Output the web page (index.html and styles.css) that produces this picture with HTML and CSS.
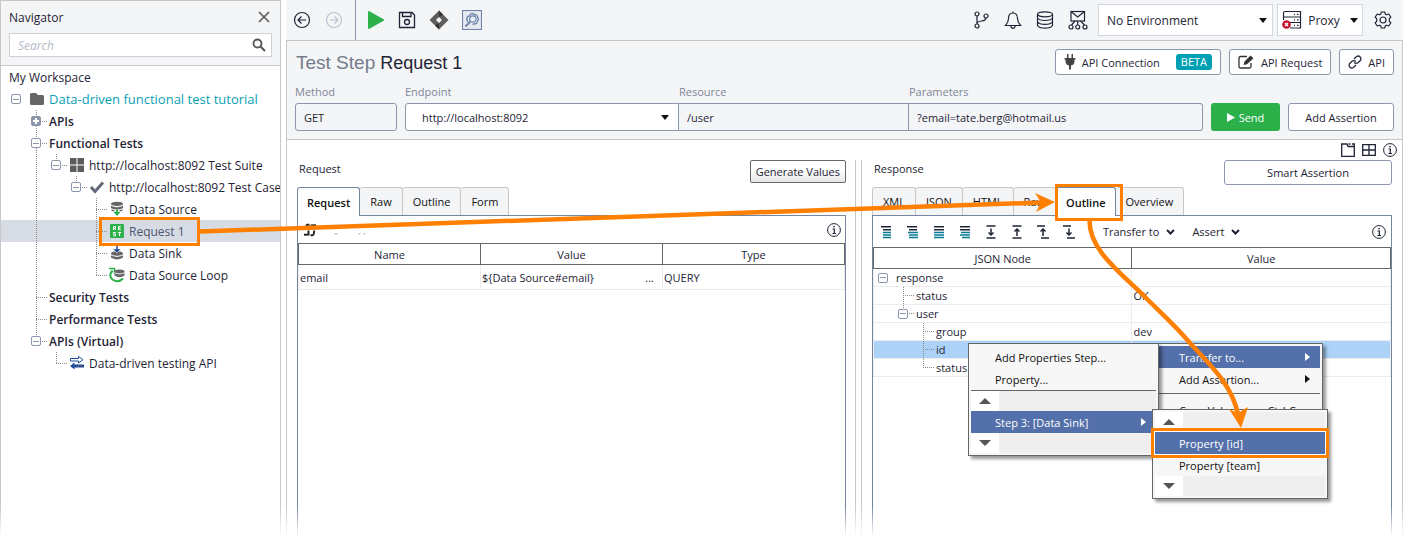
FILE: index.html
```
<!DOCTYPE html>
<html lang="en">
  <head>
    <meta charset="utf-8">
    <title>Test Step - Request 1</title>
    <link rel="stylesheet" href="styles.css">
  </head>

  <body>
    <nav class="navigator">
      <div class="nav-header">
        <div class="nav-title">
          <span>Navigator</span>
          <button class="icon-button" aria-label="Close">
            <svg width="12" height="12" viewBox="0 0 12 12"><path d="M1 1L11 11M11 1L1 11" stroke="#5a5a5a" stroke-width="1.6" fill="none"/></svg>
          </button>
        </div>
        <div class="search">
          <input type="text" placeholder="Search" aria-label="Search">
          <svg width="14" height="14" viewBox="0 0 14 14"><circle cx="5.5" cy="5.5" r="4" stroke="#555" stroke-width="1.8" fill="none"/><path d="M8.5 8.5L13 13" stroke="#555" stroke-width="2"/></svg>
        </div>
      </div>

      <ul class="tree">
        <li class="row root">My Workspace</li>
        <li class="row">
          <span class="cell last"><button class="toggle" aria-label="Collapse project"></button></span>
          <svg class="node-icon" width="16" height="16" viewBox="0 0 16 16"><path d="M1 3.5Q1 2 2.5 2H7L9 4H13.5Q15 4 15 5.500V12.500Q15 14 13.500 14H2.500Q1 14 1 12.500Z" fill="#666"/></svg>
          <a class="project" href="#">Data-driven functional test tutorial</a>
        </li>
        <li class="row">
          <span class="cell"></span><span class="cell v h last"><button class="toggle plus" aria-label="Expand APIs"></button></span>
          <b>APIs</b>
        </li>
        <li class="row">
          <span class="cell"></span><span class="cell v h last"><button class="toggle" aria-label="Collapse Functional Tests"></button></span>
          <b>Functional Tests</b>
        </li>
        <li class="row">
          <span class="cell"></span><span class="cell v"></span><span class="cell end h last"><button class="toggle" aria-label="Collapse Test Suite"></button></span>
          <svg class="node-icon" width="16" height="16" viewBox="0 0 16 16"><path d="M1 1h6.500v6.500H1zM8.500 1H15v6.500H8.500zM1 8.500h6.500V15H1zM8.500 8.500H15V15H8.500z" fill="#5d5d5d"/></svg>
          <span>http://localhost:8092 Test Suite</span>
        </li>
        <li class="row">
          <span class="cell"></span><span class="cell v"></span><span class="cell"></span><span class="cell end h last"><button class="toggle" aria-label="Collapse Test Case"></button></span>
          <svg class="node-icon" width="16" height="16" viewBox="0 0 16 16"><path d="M2 8L6 12.500L14 3.500" stroke="#646b78" stroke-width="3" fill="none"/></svg>
          <span>http://localhost:8092 Test Case</span>
        </li>
        <li class="row">
          <span class="cell"></span><span class="cell v"></span><span class="cell"></span><span class="cell"></span><span class="cell v h last"></span>
          <svg class="node-icon" width="16" height="16" viewBox="0 0 16 16"><g fill="#666"><ellipse cx="8" cy="3" rx="6" ry="2.300"/><path d="M2 4.500Q8 8 14 4.500V7Q8 10 2 7Z"/><path d="M2.500 8Q4 9 5.500 9.300V10.500Q3.500 10.300 2.500 9.500ZM13.500 8Q12 9 10.500 9.300V10.500Q12.500 10.300 13.500 9.500Z"/></g><path d="M2 4.300Q8 7.200 14 4.300" stroke="#fff" stroke-width=".8" fill="none"/><path d="M7 8.500H9V11H11.500L8 15L4.500 11H7Z" fill="#2bb04a"/></svg>
          <span>Data Source</span>
        </li>
        <li class="row selected">
          <span class="cell"></span><span class="cell v"></span><span class="cell"></span><span class="cell"></span><span class="cell v h last"></span>
          <svg class="node-icon" width="16" height="16" viewBox="0 0 16 16"><rect x="1" y="1" width="14" height="14" rx="1" fill="#2bb04a"/><path d="M4.500 7V3.500H6.500V5.200H4.500M5.500 5.200L6.800 7M11.800 3.500H9.500V6.800H11.800M9.500 5.200H11.500M6.800 9.500H4.500V11.100H6.500V12.800H4.200M9 9.500H12.200M10.600 9.500V13" stroke="#fff" fill="none"/></svg>
          <span>Request 1</span>
        </li>
        <li class="row">
          <span class="cell"></span><span class="cell v"></span><span class="cell"></span><span class="cell"></span><span class="cell v h last"></span>
          <svg class="node-icon" width="16" height="16" viewBox="0 0 16 16"><g fill="#666"><ellipse cx="8" cy="8.500" rx="6" ry="2.300"/><path d="M2 9.500Q8 13 14 9.500V12.500Q8 16.500 2 12.500Z"/></g><path d="M2 10.200Q8 13.200 14 10.200" stroke="#fff" stroke-width=".8" fill="none"/><path d="M7 0H9V4H12L8 8L4 4H7Z" fill="#1f4e9e" stroke="#fff" stroke-width=".5"/></svg>
          <span>Data Sink</span>
        </li>
        <li class="row">
          <span class="cell"></span><span class="cell v"></span><span class="cell"></span><span class="cell"></span><span class="cell end h last"></span>
          <svg class="node-icon" width="16" height="16" viewBox="0 0 16 16"><path d="M3.500 3.500Q-1 9 3.500 12.500Q9 16.500 14 11.500" stroke="#2bb04a" stroke-width="2" fill="none"/><path d="M0 1.500H5.500V6.500" stroke="#2bb04a" stroke-width="1.600" fill="none"/><g fill="#666"><ellipse cx="10.500" cy="4.500" rx="5" ry="2"/><path d="M5.500 5.500Q10.500 8 15.500 5.500V8.500Q10.500 12 5.500 8.500Z"/></g><path d="M5.500 5.800Q10.500 8.500 15.500 5.800" stroke="#fff" stroke-width=".7" fill="none"/></svg>
          <span>Data Source Loop</span>
        </li>
        <li class="row">
          <span class="cell"></span><span class="cell v h last"></span>
          <b>Security Tests</b>
        </li>
        <li class="row">
          <span class="cell"></span><span class="cell v h last"></span>
          <b>Performance Tests</b>
        </li>
        <li class="row">
          <span class="cell"></span><span class="cell end h last"><button class="toggle" aria-label="Collapse virtual APIs"></button></span>
          <b>APIs (Virtual)</b>
        </li>
        <li class="row">
          <span class="cell"></span><span class="cell"></span><span class="cell end h last"></span>
          <svg class="node-icon" width="16" height="16" viewBox="0 0 16 16"><path d="M1.500 3.500H9.500V1.500L14 4.700L9.500 8V6H1.500Z" fill="#fff" stroke="#1f4e9e"/><path d="M1 11L5.500 7.500V9.500H15V12.500H5.500V14.500Z" fill="#1f4e9e"/><path d="M9 11h1M12 11h1" stroke="#e0552b"/></svg>
          <span>Data-driven testing API</span>
        </li>
      </ul>
    </nav>

    <main>
      <div class="toolbar">
        <div class="tool-group history">
          <button class="icon-button" aria-label="Back"><svg width="18" height="18" viewBox="0 0 18 18" fill="none" stroke="#1e2435" stroke-width="1.200"><circle cx="9" cy="9" r="7.500"/><path d="M13 9H5M8.500 5.500L5 9L8.500 12.500"/></svg></button>
          <button class="icon-button" aria-label="Forward"><svg width="18" height="18" viewBox="0 0 18 18" fill="none" stroke="#bcc2cf" stroke-width="1.200"><circle cx="9" cy="9" r="7.500"/><path d="M5 9H13M9.500 5.500L13 9L9.500 12.500"/></svg></button>
        </div>
        <div class="tool-group">
          <button class="icon-button" aria-label="Run"><svg width="18" height="18" viewBox="0 0 18 18"><path d="M1 1Q1 0 2 0L17 8.500V9.500L2 18Q1 18 1 17Z" fill="#2bb04a"/></svg></button>
          <button class="icon-button" aria-label="Save"><svg width="18" height="18" viewBox="0 0 18 18" fill="none" stroke="#1e2435" stroke-width="1.300"><path d="M1.500 1.500H14L16.500 4V16.500H1.500ZM4.500 1.500V5.500H13V1.500"/><circle cx="9" cy="11" r="2.500"/></svg></button>
          <button class="icon-button" aria-label="Integrations"><svg width="20" height="20" viewBox="0 0 20 20"><path d="M10 .5L19.500 10L10 19.500L.5 10Z" fill="#5d5d5d"/><path d="M10 .5L14 4.500L10 7ZM10 13V19.500L6 15.500Z" fill="#333"/><path d="M10 7L13 10L10 13L7 10Z" fill="#f4f5f7"/></svg></button>
          <button class="icon-button" aria-label="Preferences"><svg width="20" height="20" viewBox="0 0 20 20" fill="none" stroke="#7286a8"><rect x=".5" y=".5" width="19" height="19" fill="#e6ebf3" stroke-width="1.200"/><path d="M5.800 12Q4 9 5.500 6.500L7.500 6L8.500 4L11 3.500L12.500 4.500L14.500 5L15.500 7L16.500 9L15.500 11.500L14.500 13.500L12 14L10.500 14.500" stroke-width="1.400"/><circle cx="10.800" cy="9" r="3.200" stroke-width="1.200"/><path d="M8.300 11.500L3.500 16.500" stroke-width="2"/></svg></button>
        </div>
        <div class="tool-group right">
          <button class="icon-button" aria-label="Branches"><svg width="18" height="18" viewBox="0 0 18 18" fill="none" stroke="#1e2435" stroke-width="1.200"><circle cx="5" cy="3" r="2"/><circle cx="5" cy="15" r="2"/><circle cx="14" cy="5" r="2"/><path d="M5 5V13M14 7Q14 9.500 9.500 10Q5 10.500 5 13"/></svg></button>
          <button class="icon-button" aria-label="Notifications"><svg width="18" height="18" viewBox="0 0 18 18" fill="none" stroke="#1e2435" stroke-width="1.200"><path d="M9 2Q4.500 2 4.500 7.500Q4.500 11.500 1.500 14.500H16.500Q13.500 11.500 13.500 7.500Q13.500 2 9 2ZM9 2V.5M6.800 14.500Q7 17.400 9 17.400Q11 17.400 11.200 14.500"/></svg></button>
          <button class="icon-button" aria-label="Databases"><svg width="18" height="18" viewBox="0 0 18 18" fill="none" stroke="#1e2435" stroke-width="1.200"><ellipse cx="9" cy="3.300" rx="7.500" ry="2.500"/><path d="M1.500 3.300V14.500Q3 17.200 9 17.200Q15 17.200 16.500 14.500V3.300M1.500 7Q3 9.500 9 9.500Q15 9.500 16.500 7M1.500 10.700Q3 13.400 9 13.400Q15 13.400 16.500 10.700"/></svg></button>
          <button class="icon-button" aria-label="Messages"><svg width="20" height="20" viewBox="0 0 20 20" fill="none" stroke="#1e2435" stroke-width="1.200"><rect x="3" y="1.500" width="13.500" height="9.500"/><path d="M3 1.500L9.700 7L16.500 1.500M9.700 11V15M7 11L3.500 15M12.500 11L16.500 15"/><circle cx="3" cy="17" r="2"/><circle cx="9.700" cy="17" r="2"/><circle cx="17" cy="17" r="2"/></svg></button>
          <select class="environment" aria-label="Environment"><option>No Environment</option></select>
          <button class="proxy">
            <svg width="20" height="20" viewBox="0 0 20 20" fill="none" stroke="#1e2435" stroke-width="1.200"><path d="M1.500 8V3Q1.500 1.500 3 1.500H18.500V7H1.500M8 12.500H18.500V7M8 18H18.500V12.500M1.500 10V7M12 4.300H13M15 4.300H16.500M12 9.800H13M15 9.800H16.500M12 15.300H13M15 15.300H16.500"/><circle cx="4.500" cy="14.500" r="4.300" fill="#c8102e" stroke="none"/><path d="M3 13L6 16M6 13L3 16" stroke="#fff" stroke-width="1.400"/></svg>
            Proxy
            <svg class="caret" width="8" height="5" viewBox="0 0 8 5"><path d="M0 0H8L4 5Z" fill="#111"/></svg>
          </button>
          <button class="icon-button" aria-label="Settings"><svg width="18" height="18" viewBox="0 0 18 18" fill="none" stroke="#1e2435" stroke-width="1.200"><path d="M7.300 1H10.700L11.300 3.200L12.500 3.800L14.700 3L16.800 6L15.300 7.800V10.200L16.800 12L14.700 15L12.500 14.200L11.300 14.800L10.700 17H7.300L6.700 14.800L5.500 14.200L3.300 15L1.200 12L2.700 10.200V7.800L1.200 6L3.300 3L5.500 3.800L6.700 3.200Z" stroke-linejoin="round"/><circle cx="9" cy="9" r="3"/></svg></button>
        </div>
      </div>

      <section class="step">
        <div class="step-title">
          <h1><span>Test Step</span> Request 1</h1>
          <button class="button"><svg width="12" height="16" viewBox="0 0 12 16" fill="#444"><path d="M3 0H4.500V4H3ZM7.500 0H9V4H7.500ZM.5 4H11.500V5.500H10.500V8Q10 11 7 11.500V15.500H5V11.500Q2 11 1.500 8V5.500H.5Z"/></svg>API Connection<span class="beta">BETA</span></button>
          <button class="button"><svg width="17" height="14" viewBox="0 0 17 14" fill="none"><path d="M13 8V11.500Q13 13 11.500 13H2.500Q1 13 1 11.500V3Q1 1.500 2.500 1.500H9" stroke="#333" stroke-width="1.300"/><path d="M5.500 10L6.500 6.500L12.500 .5L15.500 3.200L9 9.200Z" fill="#333"/></svg>API Request</button>
          <button class="button"><svg width="14" height="14" viewBox="0 0 14 14" fill="none" stroke="#222b3d" stroke-width="1.300"><path d="M6 4L8.500 1.500Q10.500 .3 12 1.800Q13.600 3.400 12.500 5.300L10 7.800Q8 9.200 6 7.500M8 10L5.500 12.500Q3.500 13.700 2 12.200Q.4 10.600 1.500 8.700L4 6.200Q6 4.800 8 6.500"/></svg>API</button>
        </div>
        <div class="step-form">
          <div class="field method"><label for="method">Method</label><input id="method" type="text" value="GET" readonly></div>
          <div class="endpoint-group">
            <div class="field endpoint"><label for="endpoint">Endpoint</label><select id="endpoint"><option>http://localhost:8092</option></select></div>
            <div class="field resource"><label for="resource">Resource</label><input id="resource" type="text" value="/user"></div>
            <div class="field parameters"><label for="parameters">Parameters</label><input id="parameters" type="text" value="?email=tate.berg@hotmail.us"></div>
          </div>
          <button class="send"><svg width="8" height="9" viewBox="0 0 8 9"><path d="M0 0L8 4.500L0 9Z" fill="#fff"/></svg>Send</button>
          <button class="assertion">Add Assertion</button>
        </div>
      </section>

      <div class="layout-icons">
        <button class="icon-button" aria-label="Tabbed layout"><svg width="14" height="14" viewBox="0 0 14 14" fill="none" stroke="#1e2435" stroke-width="1.300"><path d="M.7 1H6L7 3.500H13.300V13.300H.7ZM7.500 1H9.500M11 1H13.300V3.500"/></svg></button>
        <button class="icon-button" aria-label="Split layout"><svg width="14" height="14" viewBox="0 0 14 14" fill="none" stroke="#1e2435" stroke-width="1.300"><path d="M.7 1.700H13.300V12.300H.7ZM7 1.700V12.300M.7 7H13.300"/></svg></button>
        <button class="icon-button" aria-label="Info"><svg width="14" height="14" viewBox="0 0 14 14" fill="none" stroke="#1e2435"><circle cx="7" cy="7" r="6.400"/><path d="M5.500 6H7.300V10.500M5.500 10.500H9M6.200 3.700H7.800" stroke-width="1.200"/></svg></button>
      </div>

      <div class="panes">
        <section class="pane request">
          <div class="pane-head"><h2>Request</h2><button class="generate">Generate Values</button></div>
          <div class="tabs">
            <button class="tab active">Request</button><button class="tab">Raw</button><button class="tab">Outline</button><button class="tab">Form</button>
          </div>
          <div class="panel">
            <div class="panel-tools">
              <button class="icon-button" aria-label="Refresh"><svg width="14" height="14" viewBox="0 0 14 14" fill="none" stroke="#222" stroke-width="2"><path d="M6.500 1.800H4.500Q3 1.800 2.800 6.500M5.500 7.500V11.500L1 11.800M7.500 12.200H9.500Q11 12.200 11.200 7.500M8.500 6.500V2.500L13 2.200"/></svg></button>
              <button class="icon-button" aria-label="Delete" disabled><svg width="14" height="14" viewBox="0 0 14 14"><path d="M5 10h4l-2 2.500z" fill="#c3c8d2"/></svg></button>
              <button class="icon-button" aria-label="Move" disabled><svg width="14" height="14" viewBox="0 0 14 14"><path d="M3 10h3l-1.500 2zM8 10h3l-1.500 2z" fill="#c3c8d2"/></svg></button>
              <button class="icon-button info" aria-label="Request info"><svg width="14" height="14" viewBox="0 0 14 14" fill="none" stroke="#1e2435"><circle cx="7" cy="7" r="6.400"/><path d="M5.500 6H7.300V10.500M5.500 10.500H9M6.200 3.700H7.800" stroke-width="1.200"/></svg></button>
            </div>
            <table>
              <tr><th>Name</th><th>Value</th><th>Type</th></tr>
              <tr><td>email</td><td><div class="value-cell">${Data Source#email}<span>...</span></div></td><td>QUERY</td></tr>
            </table>
          </div>
        </section>

        <section class="pane response">
          <div class="pane-head"><h2>Response</h2><button class="smart">Smart Assertion</button></div>
          <div class="tabs">
            <button class="tab">XML</button><button class="tab">JSON</button><button class="tab">HTML</button><button class="tab">Raw</button><button class="tab active">Outline</button><button class="tab">Overview</button>
          </div>
          <div class="panel">
            <div class="panel-tools">
              <button class="icon-button" aria-label="Collapse all"><svg width="14" height="14" viewBox="0 0 14 14"><path d="M1 1.800H11M3 4.800H11" stroke="#1e2435" stroke-width="1.600"/><path d="M3 7.500H11M3 10H11M3 12.500H11" stroke="#087a94" stroke-width="1.500"/></svg></button>
              <button class="icon-button" aria-label="Expand all"><svg width="14" height="14" viewBox="0 0 14 14"><path d="M1 1.800H11M3 4.800H11" stroke="#1e2435" stroke-width="1.600"/><path d="M2 7.500H12M3 10H12M3 12.500H12" stroke="#087a94" stroke-width="1.500"/></svg></button>
              <button class="icon-button" aria-label="Collapse node"><svg width="14" height="14" viewBox="0 0 14 14"><path d="M2 1.800H12M2 4.800H12" stroke="#1e2435" stroke-width="1.600"/><path d="M2 7.500H12M2 10H12M2 12.500H12" stroke="#087a94" stroke-width="1.500"/></svg></button>
              <button class="icon-button" aria-label="Expand node"><svg width="14" height="14" viewBox="0 0 14 14"><path d="M2 1.800H12M2 4.800H12" stroke="#1e2435" stroke-width="1.600"/><path d="M3 7.500H12M2 10H12M4 12.500H12" stroke="#087a94" stroke-width="1.500"/></svg></button>
              <button class="icon-button" aria-label="Move down"><svg width="14" height="14" viewBox="0 0 14 14" fill="none" stroke="#1e2435" stroke-width="1.500"><path d="M2.500 1H11.500M2.500 13H11.500M7 3.500V10M4.500 7.500L7 10L9.500 7.500"/></svg></button>
              <button class="icon-button" aria-label="Move up"><svg width="14" height="14" viewBox="0 0 14 14" fill="none" stroke="#1e2435" stroke-width="1.500"><path d="M2.500 1H11.500M2.500 13H11.500M7 11V4M4.500 6.500L7 4L9.500 6.500"/></svg></button>
              <button class="icon-button" aria-label="Previous match"><svg width="14" height="14" viewBox="0 0 14 14" fill="none" stroke="#1e2435" stroke-width="1.500"><path d="M1 1H9M5 13H13M7 11V4M4.500 6.500L7 4L9.500 6.500"/></svg></button>
              <button class="icon-button" aria-label="Next match"><svg width="14" height="14" viewBox="0 0 14 14" fill="none" stroke="#1e2435" stroke-width="1.500"><path d="M1 1H9M5 13H13M7 3.500V10M4.500 7.500L7 10L9.500 7.500"/></svg></button>
              <button class="drop">Transfer to <svg width="9" height="6" viewBox="0 0 9 6"><path d="M1 1L4.500 4.500L8 1" stroke="#1e2435" stroke-width="2" fill="none"/></svg></button>
              <button class="drop">Assert <svg width="9" height="6" viewBox="0 0 9 6"><path d="M1 1L4.500 4.500L8 1" stroke="#1e2435" stroke-width="2" fill="none"/></svg></button>
              <button class="icon-button info" aria-label="Response info"><svg width="14" height="14" viewBox="0 0 14 14" fill="none" stroke="#1e2435"><circle cx="7" cy="7" r="6.400"/><path d="M5.500 6H7.300V10.500M5.500 10.500H9M6.200 3.700H7.800" stroke-width="1.200"/></svg></button>
            </div>
            <table>
              <tr><th>JSON Node</th><th>Value</th></tr>
              <tr><td><div class="row"><span class="cell last"><button class="toggle" aria-label="Collapse response"></button></span>response</div></td><td></td></tr>
              <tr><td><div class="row"><span class="cell"></span><span class="cell v h last"></span>status</div></td><td>OK</td></tr>
              <tr><td><div class="row"><span class="cell"></span><span class="cell end h last"><button class="toggle" aria-label="Collapse user"></button></span>user</div></td><td></td></tr>
              <tr><td><div class="row"><span class="cell"></span><span class="cell"></span><span class="cell v h last"></span>group</div></td><td>dev</td></tr>
              <tr class="selected"><td><div class="row"><span class="cell"></span><span class="cell"></span><span class="cell v h last"></span>id</div></td><td></td></tr>
              <tr><td><div class="row"><span class="cell"></span><span class="cell"></span><span class="cell end h last"></span>status</div></td><td></td></tr>
            </table>
          </div>
        </section>
      </div>
    </main>

    <div class="menu context-menu">
      <button class="item active">Transfer to...<i class="arrow"></i></button>
      <button class="item">Add Assertion...<i class="arrow"></i></button>
      <hr>
      <button class="item">Copy Value <span class="shortcut">Ctrl-C</span></button>
    </div>
    <div class="menu transfer-menu">
      <button class="item">Add Properties Step...</button>
      <button class="item">Property...</button>
      <hr>
      <div class="scroller"><button aria-label="Scroll up"><i class="up"></i></button></div>
      <button class="item active">Step 3: [Data Sink]<i class="arrow"></i></button>
      <div class="scroller"><button aria-label="Scroll down"><i class="down"></i></button></div>
    </div>
    <div class="menu property-menu">
      <div class="scroller"><button aria-label="Scroll up"><i class="up"></i></button></div>
      <button class="item active">Property [id]</button>
      <button class="item">Property [team]</button>
      <div class="scroller"><button aria-label="Scroll down"><i class="down"></i></button></div>
    </div>

    <!-- tutorial steps: highlight boxes and arrows -->
    <svg class="guide" width="1403" height="542" viewBox="0 0 1403 542" fill="none" stroke="#ff8000">
      <g stroke-width="3">
        <rect x="100.500" y="218.500" width="98" height="26"/>
        <rect x="1056.500" y="185.500" width="65" height="34"/>
        <rect x="1152.500" y="429.500" width="175" height="27"/>
      </g>
      <rect x="1154.500" y="431.500" width="171" height="23" stroke="#fff"/>
      <path d="M200 231.500L1042 202.500" stroke-width="4.500"/>
      <path d="M1055 202L1036 212L1041 202.500L1035 193Z" fill="#ff8000" stroke="none"/>
      <path d="M1089.500 220C1089 250 1120 272 1145 297C1160 312 1175 325 1190 343C1210 365 1231 383 1238 414" stroke-width="4.500"/>
      <path d="M1241 428L1229 409L1238 413L1248 407Z" fill="#ff8000" stroke="none"/>
    </svg>
    <div class="fade"></div>
  </body>
</html>
```
FILE: styles.css
```
* {
  box-sizing: border-box;
}

body {
  margin: 0;
  min-height: 100vh;
  display: flex;
  gap: 5px;
  position: relative;
  overflow: hidden;
  background: #fff;
  color: #1e2435;
  font-family: "Open Sans", "Noto Sans", sans-serif;
  font-size: 11px;
}

button, input, select {
  font: inherit;
  color: inherit;
  margin: 0;
}

button {
  display: flex;
  align-items: center;
  justify-content: center;
  white-space: nowrap;
  padding: 0;
}

h1, h2 {
  margin: 0;
  font-weight: normal;
}

svg {
  flex: none;
}

.icon-button {
  border: none;
  background: none;
}

/* navigator */
.navigator {
  width: 281px;
  flex: none;
  font-size: 12px;
  border: 1px solid #c8c8c8;
  border-bottom: none;
  overflow: hidden;
}

.nav-header {
  background: #f4f5f7;
  border-bottom: 1px solid #c8c8c8;
  padding: 8px;
  height: 65px;
}

.nav-title {
  display: flex;
  justify-content: space-between;
  align-items: center;
  height: 16px;
  margin-bottom: 8px;
  padding-right: 2px;
}

.search {
  display: flex;
  align-items: center;
  height: 24px;
  padding: 0 5px 0 8px;
  background: #fff;
  border: 1px solid #d0d0d4;
}

.search input {
  flex: 1;
  min-width: 0;
  border: none;
  padding: 0;
  outline: none;
}

.search input::placeholder {
  color: #b4bac8;
  font-style: italic;
}

.tree {
  list-style: none;
  margin: 0;
  padding: 0;
}

.row {
  display: flex;
  align-items: center;
  height: 22px;
  white-space: nowrap;
}

.tree .row {
  padding-left: 5px;
}

.tree .root {
  padding-left: 8px;
}

.tree b {
  font-weight: 600;
}

.tree .selected {
  background: #d7dce4;
  color: #4d5470;
}

.project {
  color: #0b9fb5;
  font-size: 13px;
  text-decoration: none;
}

.node-icon {
  margin-right: 4px;
}

/* tree guide lines */
.cell {
  flex: none;
  width: 20px;
  align-self: stretch;
  display: flex;
  align-items: center;
  padding-left: 5px;
}

.last {
  width: 23px;
}

.cell.v {
  background: repeating-linear-gradient(#8a8a8a 0 1px, transparent 1px 2px) 10px 0 / 1px 100% no-repeat;
}

.cell.v.h {
  background: repeating-linear-gradient(#8a8a8a 0 1px, transparent 1px 2px) 10px 0 / 1px 100% no-repeat, repeating-linear-gradient(90deg, #8a8a8a 0 1px, transparent 1px 2px) 10px 50% / 12px 1px no-repeat;
}

.cell.end {
  background: repeating-linear-gradient(#8a8a8a 0 1px, transparent 1px 2px) 10px 0 / 1px 50% no-repeat, repeating-linear-gradient(90deg, #8a8a8a 0 1px, transparent 1px 2px) 10px 50% / 12px 1px no-repeat;
}

.toggle {
  width: 10px;
  height: 10px;
  border: 1px solid #8c97ae;
  border-radius: 2px;
  background: linear-gradient(#8c97ae, #8c97ae) center / 6px 1px no-repeat #fff;
}

.toggle.plus {
  background: linear-gradient(#fff, #fff) center / 6px 2px no-repeat, linear-gradient(#fff, #fff) center / 2px 6px no-repeat #8c97ae;
}

/* main area */
main {
  flex: 1;
  min-width: 0;
  display: flex;
  flex-direction: column;
}

.toolbar {
  display: flex;
  align-items: center;
  height: 40px;
  background: #f4f5f7;
}

.tool-group {
  display: flex;
  align-items: center;
  gap: 13px;
  height: 40px;
  padding-left: 11px;
}

.history {
  gap: 14px;
  padding: 0 12px 0 7px;
  border-right: 1px solid #8c97ae;
}

.right {
  gap: 14px;
  margin-left: auto;
  padding-right: 11px;
}

select {
  appearance: none;
  background: #fff url("data:image/svg+xml,%3Csvg xmlns='http://www.w3.org/2000/svg' width='8' height='5'%3E%3Cpath d='M0 0H8L4 5Z' fill='%23111'/%3E%3C/svg%3E") no-repeat right 5px center;
}

.environment {
  width: 175px;
  height: 32px;
  margin: 0 -10px 0 -4px;
  padding: 0 8px;
  border: 1px solid #d2d6df;
}

.proxy {
  width: 86px;
  height: 32px;
  gap: 6px;
  margin-right: -3px;
  background: #fff;
  border: 1px solid #d2d6df;
}

.environment, .proxy {
  font-size: 12px;
}

.proxy .caret {
  margin-left: 4px;
}

.step {
  background: #f4f5f7;
  border: 1px solid #c8c8c8;
  padding: 8px;
  height: 100px;
}

.step-title {
  display: flex;
  gap: 8px;
  height: 26px;
}

h1 {
  flex: 1;
  padding-left: 1px;
  font-family: "Liberation Sans", Arial, sans-serif;
  font-size: 18px;
  line-height: 28px;
}

h1 span {
  color: #747b8a;
  font-size: 19px;
}

.button, .assertion, .smart {
  background: #fff;
  border: 1px solid #8c97ae;
  border-radius: 3px;
}

.button {
  height: 26px;
  padding: 0 8px;
  gap: 6px;
}

.beta {
  margin-left: 10px;
  padding: 0 5px;
  line-height: 16px;
  color: #fff;
  background: #00a0b4;
  border-radius: 3px;
}

.step-form {
  display: flex;
  align-items: flex-end;
  gap: 8px;
  margin-top: 9px;
}

.endpoint-group {
  display: flex;
  flex: 798;
  min-width: 0;
}

.field {
  display: flex;
  flex-direction: column;
  min-width: 0;
}

.field label {
  color: #7e8799;
  line-height: 16px;
  margin-bottom: 3px;
}

.field input, .field select {
  width: 100%;
  min-width: 0;
  height: 28px;
  padding: 0 8px;
  border: 1px solid #8c97ae;
  border-radius: 3px;
}

.field input {
  background: #f4f5f7;
}

.method {
  flex: 102;
}

.endpoint {
  flex: 274;
}

.resource {
  flex: 230;
}

.parameters {
  flex: 294;
}

.field select {
  padding-left: 16px;
  border-radius: 3px 0 0 3px;
  background-position: right 9px center;
}

.endpoint-group .field input {
  border-left: none;
  border-radius: 0;
}

.endpoint-group .parameters input {
  border-radius: 0 3px 3px 0;
}

.send {
  width: 69px;
  height: 28px;
  gap: 4px;
  color: #fff;
  background: #2bb04a;
  border: none;
  border-radius: 3px;
}

.assertion {
  width: 106px;
  height: 28px;
}

.layout-icons {
  display: flex;
  justify-content: flex-end;
  align-items: center;
  gap: 7px;
  height: 20px;
  padding-right: 5px;
  border: 1px solid #c8c8c8;
  border-width: 0 1px;
}

/* request and response panes */
.panes {
  flex: 1;
  display: flex;
  gap: 5px;
  border: 1px solid #c8c8c8;
  border-width: 0 1px;
}

.pane {
  display: flex;
  flex-direction: column;
  padding: 0 10px;
  min-width: 0;
}

.request {
  flex: 570;
  padding-right: 9px;
  border-right: 1px solid #c8c8c8;
}

.response {
  flex: 540;
  border-left: 1px solid #c8c8c8;
}

.pane-head {
  display: flex;
  justify-content: space-between;
  align-items: flex-start;
  height: 27px;
}

h2 {
  font-size: 11px;
  line-height: 18px;
  padding-left: 2px;
}

.generate {
  height: 23px;
  padding: 0 5px;
  border: 1px solid #666;
  border-radius: 2px;
  background: linear-gradient(#fff 40%, #e6e6e6);
}

.smart {
  width: 168px;
  height: 25px;
}

.tabs {
  display: flex;
  height: 29px;
  margin-bottom: -1px;
}

.tab {
  height: 28px;
  padding: 0 10px;
  color: #111;
  background: #f4f5f7;
  border: 1px solid #c8c8c8;
  border-left: none;
  border-bottom: none;
  border-radius: 3px 3px 0 0;
}

.tab:first-child {
  border-left: 1px solid #c8c8c8;
}

.tab.active {
  height: 29px;
  z-index: 1;
  padding: 0 9px;
  font-weight: 600;
  background: #fff;
  border: 1px solid #7685a0;
  border-bottom: none;
}

.panel {
  flex: 1;
  border: 1px solid #7685a0;
  border-bottom: none;
}

.panel-tools {
  display: flex;
  align-items: center;
  gap: 12px;
  height: 27px;
  padding: 0 4px 0 5px;
}

.response .panel-tools {
  height: 31px;
  padding: 0 5px 0 7px;
}

.drop {
  gap: 7px;
  margin-left: 5px;
  border: none;
  background: none;
}

.icon-button + .drop {
  margin-left: 15px;
}

.info {
  margin-left: auto;
}

table {
  width: 100%;
  table-layout: fixed;
  border-collapse: collapse;
  border: 1px solid #666;
  border-bottom: none;
}

th {
  height: 21px;
  padding: 2px 0 0;
  font-weight: normal;
  line-height: 16px;
  border: 1px solid #666;
}

td {
  height: 25px;
  padding: 1px 0 0 1px;
  line-height: 16px;
  border: 1px solid #ececec;
}

.response td {
  height: 18px;
  padding-top: 0;
}

.response td .row {
  height: 17px;
  margin-left: -2px;
}

.response .selected {
  background: #add2f8;
}

.value-cell {
  display: flex;
  justify-content: space-between;
  padding-right: 8px;
}

/* menus */
.menu {
  position: absolute;
  z-index: 2;
  padding: 2px;
  color: #111;
  background: #f7f7f7;
  border: 1px solid #666;
  box-shadow: 3px 3px 3px rgba(0, 0, 0, 0.4);
}

.menu hr {
  margin: 0;
  border: none;
  border-top: 1px solid #666;
}

.item {
  width: 100%;
  height: 22px;
  padding: 0 10px 0 24px;
  justify-content: flex-start;
  border: none;
  background: none;
}

.item.active {
  color: #fff;
  background: #5470aa;
}

.context-menu {
  left: 1152px;
  top: 343px;
  width: 171px;
  height: 100px;
}

.context-menu hr {
  margin: 3px 0 5px;
}

.transfer-menu {
  left: 968px;
  top: 343px;
  width: 191px;
}

.property-menu {
  left: 1152px;
  top: 409px;
  width: 176px;
}

.shortcut {
  margin: 0 14px 0 auto;
}

.scroller {
  height: 20px;
  background: #efefef;
}

.scroller button {
  width: 28px;
  height: 100%;
  border: none;
  background: #fff;
}

.up, .down {
  border: 6px solid transparent;
}

.up {
  border-top: none;
  border-bottom: 6px solid #555;
}

.down {
  border-bottom: none;
  border-top: 6px solid #555;
}

.arrow {
  margin-left: auto;
  border: 4px solid transparent;
  border-left: 5px solid currentColor;
  border-right: none;
}

.guide {
  position: absolute;
  left: 0;
  top: 0;
  z-index: 3;
  pointer-events: none;
}

.fade {
  position: absolute;
  left: 0;
  right: 0;
  bottom: 0;
  height: 36px;
  z-index: 4;
  background: linear-gradient(rgba(255, 255, 255, 0), #fff 85%);
  pointer-events: none;
}
```
